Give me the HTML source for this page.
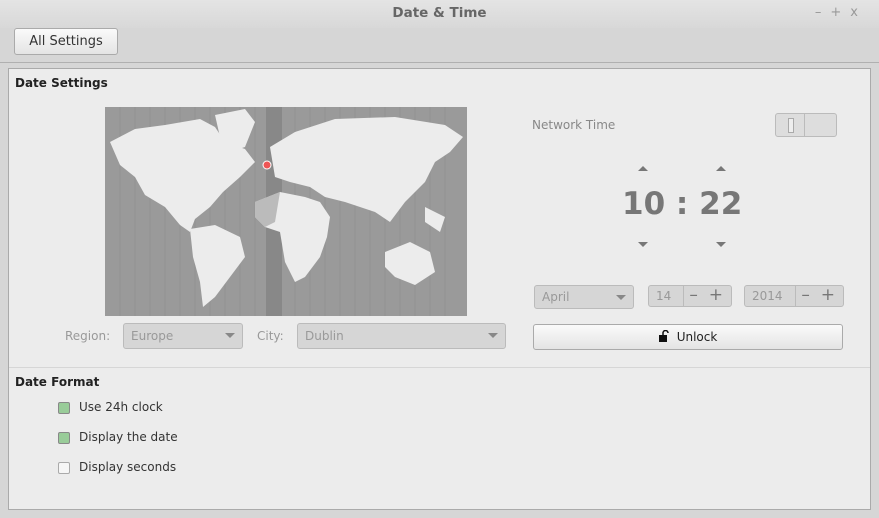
<!DOCTYPE html>
<html><head><style>
body{margin:0;width:879px;height:518px;background:#d6d6d6;font-family:"DejaVu Sans","Liberation Sans",sans-serif;font-size:12px;color:#333;position:relative;overflow:hidden}
.abs{position:absolute}
.title{left:0;top:0;width:879px;height:28px;background:linear-gradient(#e4e4e4,#d8d8d8);text-align:center;line-height:26px;font-weight:bold;color:#666;font-size:13.5px}
.btn{background:linear-gradient(#fafafa,#e4e4e4);border:1px solid #aaa;border-radius:3px;box-sizing:border-box}
.panel{left:8px;top:68px;width:863px;height:442px;background:#ececec;border:1px solid #aaa;box-sizing:border-box}
.combo{background:#d6d6d6;border:1px solid #bbb;border-radius:3px;box-sizing:border-box;color:#999;padding-left:7px;line-height:24px}
.arr{position:absolute;right:7px;top:9px;width:0;height:0;border-left:5px solid transparent;border-right:5px solid transparent;border-top:5px solid #888}
.lbl{color:#999}
.cb{width:12px;height:12px;border:1px solid #888;border-radius:2px;background:#9c9;box-sizing:border-box}
</style></head><body>
<div class="abs title">Date &amp; Time</div>
<div class="abs" style="right:12px;top:5px;color:#999;font-size:13px;letter-spacing:9px">–+x</div>
<div class="abs btn" style="left:14px;top:28px;width:104px;height:27px;text-align:center;line-height:25px;color:#333;font-size:13px">All Settings</div>
<div class="abs" style="left:0;top:62px;width:879px;height:1px;background:#b0b0b0"></div>
<div class="abs panel"></div>
<div class="abs" style="left:15px;top:76px;font-weight:bold;color:#222">Date Settings</div>
<svg class="abs" style="left:105px;top:107px" width="362" height="209" viewBox="0 0 362 209">
<rect width="362" height="209" fill="#9a9a9a"/>
<g stroke="#929292" stroke-width="1">
<path d="M15 0V209M30 0V209M45 0V209M60 0V209M75 0V209M90 0V209M105 0V209M120 0V209M135 0V209M150 0V209M190 0V209M205 0V209M220 0V209M235 0V209M250 0V209M265 0V209M280 0V209M295 0V209M310 0V209M325 0V209M340 0V209"/>
</g>
<rect x="161" width="16" height="209" fill="#888"/>
<g fill="#ececec">
<path d="M5 35 L30 22 L60 18 L95 12 L110 20 L120 35 L140 42 L150 55 L135 70 L118 85 L105 100 L90 112 L85 125 L75 118 L60 100 L40 88 L30 70 L15 58 Z"/>
<path d="M110 8 L140 2 L150 15 L140 40 L125 45 L115 30 Z"/>
<path d="M85 122 L110 118 L135 130 L140 150 L125 170 L110 190 L98 200 L95 175 L88 150 Z"/>
<path d="M165 40 L190 25 L230 12 L290 10 L340 18 L358 30 L345 45 L330 55 L320 75 L300 95 L285 115 L270 105 L255 100 L240 95 L220 90 L205 80 L185 75 L170 70 Z"/>
<path d="M150 95 L175 85 L200 90 L215 95 L225 110 L222 130 L215 150 L200 170 L190 175 L180 155 L175 125 L160 120 L150 110 Z"/>
<path d="M280 145 L305 135 L325 145 L330 165 L310 178 L290 170 L280 160 Z"/>
<path d="M320 100 L340 110 L335 125 L320 115 Z"/>
</g>
<path d="M150 95 L175 85 L170 115 L160 120 L150 110Z" fill="#bbb"/>
<circle cx="162" cy="58" r="4" fill="#e55" stroke="#fff"/>
</svg>
<div class="abs lbl" style="left:65px;top:329px">Region:</div>
<div class="abs combo" style="left:123px;top:323px;width:120px;height:26px">Europe<div class="arr"></div></div>
<div class="abs lbl" style="left:257px;top:329px">City:</div>
<div class="abs combo" style="left:297px;top:323px;width:209px;height:26px">Dublin<div class="arr"></div></div>
<div class="abs lbl" style="left:532px;top:118px;color:#888">Network Time</div>
<div class="abs" style="left:775px;top:113px;width:62px;height:24px;border:1px solid #bbb;border-radius:3px;background:#ddd;box-sizing:border-box"><div style="position:absolute;left:28px;top:0;width:1px;height:22px;background:#bbb"></div><div style="position:absolute;left:12px;top:4px;width:4px;height:13px;border:1px solid #aaa;background:#eee"></div></div>
<div class="abs" style="left:638px;top:166px;border-left:5px solid transparent;border-right:5px solid transparent;border-bottom:5px solid #777"></div>
<div class="abs" style="left:716px;top:166px;border-left:5px solid transparent;border-right:5px solid transparent;border-bottom:5px solid #777"></div>
<div class="abs" style="left:638px;top:242px;border-left:5px solid transparent;border-right:5px solid transparent;border-top:5px solid #777"></div>
<div class="abs" style="left:716px;top:242px;border-left:5px solid transparent;border-right:5px solid transparent;border-top:5px solid #777"></div>
<div class="abs" style="left:622px;top:186px;font-size:31px;font-weight:bold;color:#777;white-space:pre">10 : 22</div>
<div class="abs combo" style="left:534px;top:285px;width:100px;height:24px;line-height:22px">April<div class="arr"></div></div>
<div class="abs combo" style="left:648px;top:285px;width:84px;height:22px;line-height:20px">14<span style="position:absolute;left:34px;top:0;width:48px;height:20px;border-left:1px solid #bbb;color:#777;font-size:17px;line-height:18px">&nbsp;–&nbsp;&nbsp;+</span></div>
<div class="abs combo" style="left:744px;top:285px;width:100px;height:22px;line-height:20px">2014<span style="position:absolute;left:50px;top:0;width:48px;height:20px;border-left:1px solid #bbb;color:#777;font-size:17px;line-height:18px">&nbsp;–&nbsp;&nbsp;+</span></div>
<div class="abs btn" style="left:533px;top:324px;width:310px;height:26px;text-align:center;line-height:24px;color:#222"><svg width="10" height="12" viewBox="0 0 10 12" style="vertical-align:-1px;margin-right:8px"><path d="M4 5V3a2.5 2.5 0 0 1 5 0" fill="none" stroke="#111" stroke-width="1.5"/><rect x="0" y="5" width="8" height="7" fill="#111"/></svg>Unlock</div>
<div class="abs" style="left:9px;top:367px;width:861px;height:1px;background:#d6d6d6"></div>
<div class="abs" style="left:15px;top:375px;font-weight:bold;color:#222">Date Format</div>
<div class="abs cb" style="left:58px;top:402px"></div><div class="abs" style="left:79px;top:400px">Use 24h clock</div>
<div class="abs cb" style="left:58px;top:432px"></div><div class="abs" style="left:79px;top:430px">Display the date</div>
<div class="abs cb" style="left:58px;top:462px;background:#f6f6f6;border-color:#aaa"></div><div class="abs" style="left:79px;top:460px">Display seconds</div>
</body></html>
